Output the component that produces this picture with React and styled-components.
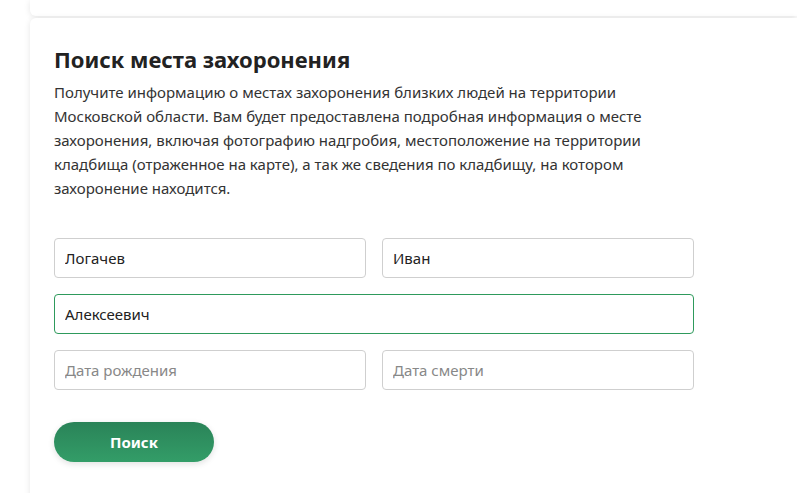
import React from 'react';
import styled, { createGlobalStyle } from 'styled-components';

const GlobalStyle = createGlobalStyle`
  html, body {
    margin: 0;
    padding: 0;
    background: #ffffff;
    font-family: "Noto Sans", "Open Sans", sans-serif;
  }
`;

const Page = styled.div`
  display: flex;
  flex-direction: column;
  gap: 2px;
  padding-left: 30px;
  height: 493px;
  overflow: hidden;
  box-sizing: border-box;
`;

const Card = styled.div`
  background: #fff;
  box-shadow: 0 1px 6px rgba(0, 0, 0, 0.1);
  flex-shrink: 0;
`;

const TopCard = styled(Card)`
  height: 16px;
  border-radius: 0 0 0 6px;
`;

const MainCard = styled(Card)`
  padding: 26px 24px 40px;
  flex: 1;
  border-radius: 6px 0 0 0;
`;

const Title = styled.h1`
  margin: 0 0 6px;
  font-size: 22px;
  font-weight: 700;
  color: #222;
  line-height: 30px;
`;

const Lead = styled.p`
  margin: 0;
  width: 620px;
  font-size: 15px;
  line-height: 24px;
  color: #333;
`;

const Form = styled.form`
  display: grid;
  grid-template-columns: 312px 312px;
  column-gap: 16px;
  row-gap: 16px;
  margin-top: 38px;
`;

const Field = styled.input`
  grid-column: ${p => (p.wide ? '1 / -1' : 'auto')};
  height: 40px;
  box-sizing: border-box;
  border: 1px solid ${p => (p.focused ? '#2e9a5c' : '#cfcfcf')};
  border-radius: 4px;
  padding: 0 10px;
  font-family: inherit;
  font-size: 15px;
  color: #222;
  background: #fff;
  outline: none;

  &::placeholder {
    color: #888;
  }
`;

const Button = styled.button`
  margin-top: 32px;
  width: 160px;
  height: 40px;
  border: none;
  border-radius: 20px;
  background: linear-gradient(180deg, #2a8358 0%, #339d68 100%);
  box-shadow: 0 2px 6px rgba(0, 0, 0, 0.12);
  color: #fff;
  font-family: inherit;
  font-size: 15px;
  font-weight: 700;
  cursor: pointer;
`;

export default function App() {
  return (
    <>
      <GlobalStyle />
      <Page>
        <TopCard />
        <MainCard>
          <Title>Поиск места захоронения</Title>
          <Lead>
            Получите информацию о местах захоронения близких людей на территории
            Московской области. Вам будет предоставлена подробная информация о месте
            захоронения, включая фотографию надгробия, местоположение на территории
            кладбища (отраженное на карте), а так же сведения по кладбищу, на котором
            захоронение находится.
          </Lead>
          <Form onSubmit={e => e.preventDefault()}>
            <Field defaultValue="Логачев" />
            <Field defaultValue="Иван" />
            <Field wide focused defaultValue="Алексеевич" />
            <Field placeholder="Дата рождения" />
            <Field placeholder="Дата смерти" />
          </Form>
          <Button type="submit">Поиск</Button>
        </MainCard>
      </Page>
    </>
  );
}
